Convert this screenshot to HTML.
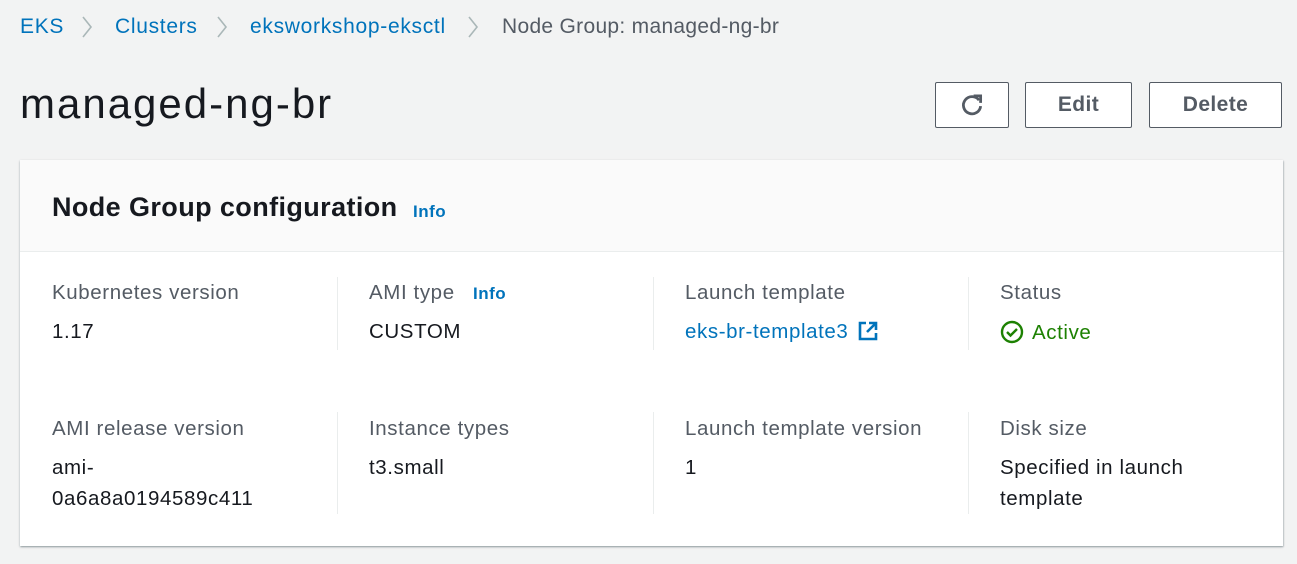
<!DOCTYPE html>
<html><head><meta charset="utf-8"><style>
*{margin:0;padding:0;box-sizing:border-box}
body{width:1297px;height:564px;background:#f2f3f3;font-family:"Liberation Sans",sans-serif;position:relative;overflow:hidden;color:#16191f}
.a{position:absolute;white-space:nowrap}
.bc{top:15px;font-size:21px;color:#0073bb;letter-spacing:0.7px}
.sep{position:absolute;top:15px}
.btn{position:absolute;top:82px;height:46px;border:1px solid #545b64;border-radius:2px;background:#fff;font-weight:bold;font-size:21px;color:#545b64;display:flex;align-items:center;justify-content:center;letter-spacing:0.4px}
.card{position:absolute;left:20px;top:160px;width:1263px;height:386px;background:#fff;box-shadow:0 1px 2px rgba(0,28,36,.35),1px 1px 1px rgba(0,28,36,.1);}
.hdr{position:absolute;left:0;top:0;width:100%;height:92px;background:#fafafa;border-bottom:1px solid #eaeded}
.lab{font-size:20.5px;color:#545b64;letter-spacing:0.6px}
.val{font-size:20.5px;color:#16191f;letter-spacing:0.6px}
.vl{position:absolute;width:1px;background:#eaeded}
.info{font-size:17px;font-weight:bold;color:#0073bb;letter-spacing:0.5px}
</style></head><body>
<div class="a bc" style="left:20px">EKS</div>
<svg class="sep" style="left:80px" width="14" height="24" viewBox="0 0 14 24"><path d="M3 2l8 10-8 10" fill="none" stroke="#aab7b8" stroke-width="1.6"/></svg>
<div class="a bc" style="left:115px">Clusters</div>
<svg class="sep" style="left:215px" width="14" height="24" viewBox="0 0 14 24"><path d="M3 2l8 10-8 10" fill="none" stroke="#aab7b8" stroke-width="1.6"/></svg>
<div class="a bc" style="left:250px">eksworkshop-eksctl</div>
<svg class="sep" style="left:466px" width="14" height="24" viewBox="0 0 14 24"><path d="M3 2l8 10-8 10" fill="none" stroke="#aab7b8" stroke-width="1.6"/></svg>
<div class="a" style="left:502px;top:15px;font-size:21px;color:#545b64;letter-spacing:0.3px">Node Group: managed-ng-br</div>
<div class="a" style="left:20px;top:80px;font-size:42px;color:#16191f;letter-spacing:2px">managed-ng-br</div>
<div class="btn" style="left:935px;width:74px"><svg width="28" height="28" viewBox="0 0 26 26"><path d="M19.5 8.5A8 8 0 1 0 21 14" fill="none" stroke="#545b64" stroke-width="2.6"/><path d="M14.5 4.5h6.5v6.5" fill="none" stroke="#545b64" stroke-width="2.6"/></svg></div>
<div class="btn" style="left:1025px;width:107px">Edit</div>
<div class="btn" style="left:1149px;width:133px">Delete</div>
<div class="card">
<div class="hdr"></div>
<div class="a" style="left:32px;top:32px;font-size:27px;font-weight:bold;letter-spacing:0.4px">Node Group configuration</div>
<div class="a info" style="left:393px;top:42px">Info</div>
<div class="vl" style="left:317px;top:117px;height:73px"></div>
<div class="vl" style="left:633px;top:117px;height:73px"></div>
<div class="vl" style="left:948px;top:117px;height:73px"></div>
<div class="vl" style="left:317px;top:252px;height:102px"></div>
<div class="vl" style="left:633px;top:252px;height:102px"></div>
<div class="vl" style="left:948px;top:252px;height:102px"></div>
<div class="a lab" style="left:32px;top:121px">Kubernetes version</div>
<div class="a val" style="left:32px;top:160px">1.17</div>
<div class="a lab" style="left:349px;top:121px">AMI type</div>
<div class="a info" style="left:453px;top:124px">Info</div>
<div class="a val" style="left:349px;top:160px">CUSTOM</div>
<div class="a lab" style="left:665px;top:121px">Launch template</div>
<div class="a val" style="left:665px;top:160px;color:#0073bb">eks-br-template3 <svg width="22" height="22" viewBox="0 0 22 22" style="vertical-align:-4px;margin-left:2px"><path d="M9 3H3v16h16v-6M12 3h7v7M19 3l-9 9" fill="none" stroke="#0073bb" stroke-width="2.6"/></svg></div>
<div class="a lab" style="left:980px;top:121px">Status</div>
<div class="a val" style="left:980px;top:160px;color:#1d8102"><svg width="24" height="24" viewBox="0 0 24 24" style="vertical-align:-5px;margin-right:8px"><circle cx="12" cy="12" r="10" fill="none" stroke="#1d8102" stroke-width="2.4"/><path d="M7 12l3.5 3.5L17 9" fill="none" stroke="#1d8102" stroke-width="2.4"/></svg>Active</div>
<div class="a lab" style="left:32px;top:257px">AMI release version</div>
<div class="a val" style="left:32px;top:292px;line-height:31px">ami-<br>0a6a8a0194589c411</div>
<div class="a lab" style="left:349px;top:257px">Instance types</div>
<div class="a val" style="left:349px;top:296px">t3.small</div>
<div class="a lab" style="left:665px;top:257px">Launch template version</div>
<div class="a val" style="left:665px;top:296px">1</div>
<div class="a lab" style="left:980px;top:257px">Disk size</div>
<div class="a val" style="left:980px;top:292px;line-height:31px">Specified in launch<br>template</div>
</div>
</body></html>
